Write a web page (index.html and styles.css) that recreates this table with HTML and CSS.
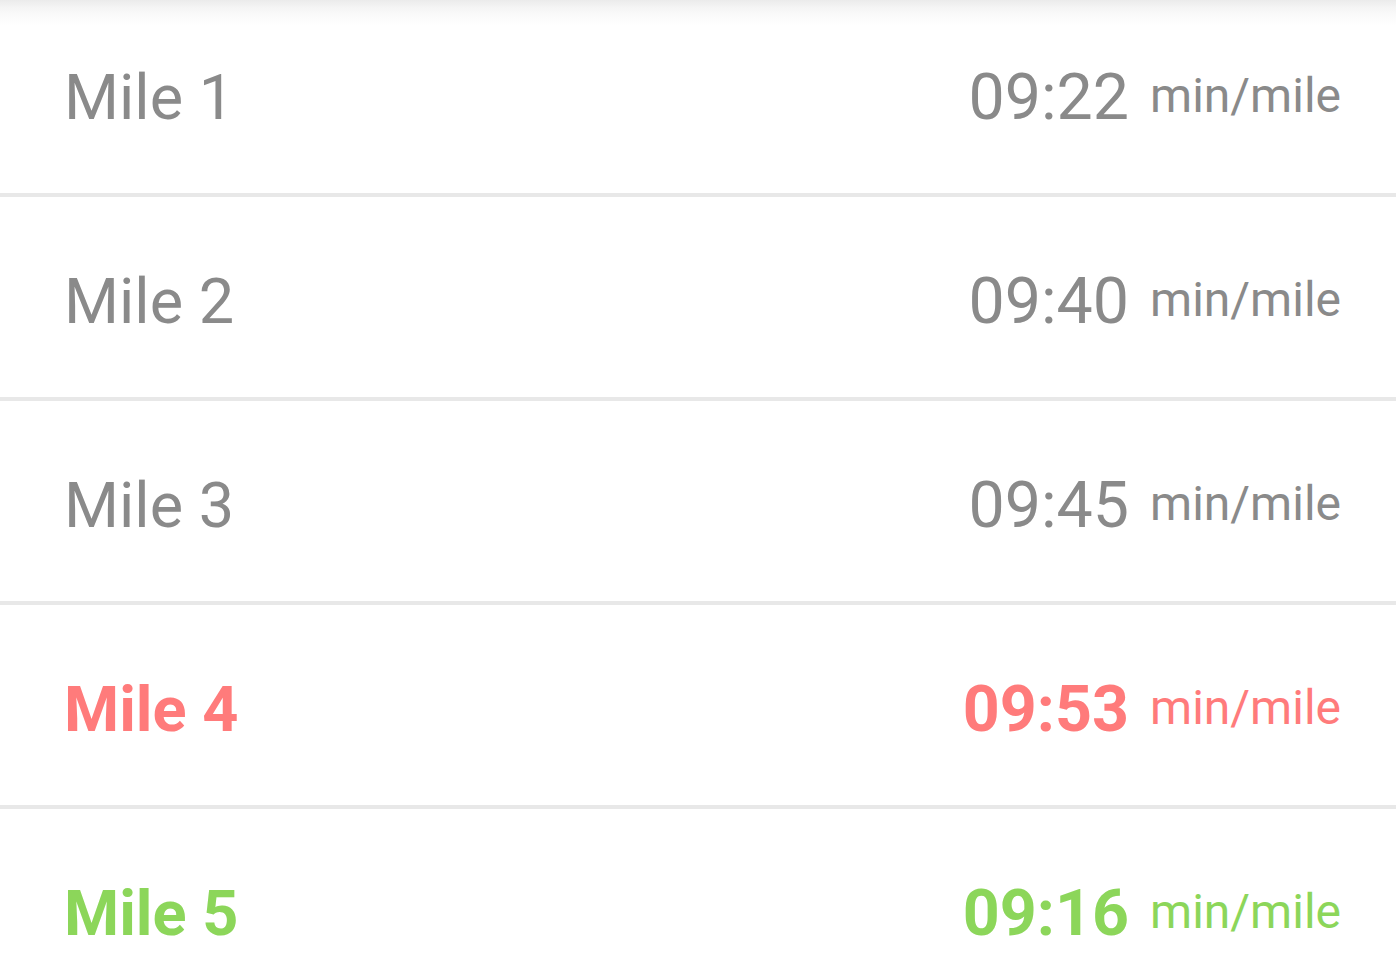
FILE: index.html
```html
<!DOCTYPE html>
<html>
<head>
<meta charset="utf-8">
<link rel="stylesheet" href="styles.css">
</head>
<body>
<div class="screen">
  <div class="shadow"></div>
  <ul class="splits">
    <li class="split"><span class="label">Mile 1</span><span class="pace"><span class="time">09:22</span><span class="unit">min/mile</span></span></li>
    <li class="split"><span class="label">Mile 2</span><span class="pace"><span class="time">09:40</span><span class="unit">min/mile</span></span></li>
    <li class="split"><span class="label">Mile 3</span><span class="pace"><span class="time">09:45</span><span class="unit">min/mile</span></span></li>
    <li class="split slow"><span class="label">Mile 4</span><span class="pace"><span class="time">09:53</span><span class="unit">min/mile</span></span></li>
    <li class="split fast"><span class="label">Mile 5</span><span class="pace"><span class="time">09:16</span><span class="unit">min/mile</span></span></li>
  </ul>
</div>
</body>
</html>
```
FILE: styles.css
```css
html, body {
  margin: 0;
  padding: 0;
  background: #ffffff;
}
body {
  font-family: Roboto, "Liberation Sans", sans-serif;
  overflow: hidden;
}
.screen {
  position: relative;
  width: 1396px;
  height: 961px;
  overflow: hidden;
}
.shadow {
  position: absolute;
  left: 0;
  top: 0;
  width: 100%;
  height: 26px;
  background: linear-gradient(to bottom, #ebebeb 0%, #f5f5f5 30%, #fbfbfb 65%, rgba(255,255,255,0) 100%);
  z-index: 2;
}
.splits {
  list-style: none;
  margin: -7px 0 0 0;
  padding: 0;
}
.split {
  display: flex;
  justify-content: space-between;
  align-items: baseline;
  height: 204px;
  box-sizing: border-box;
  padding: 70px 55px 0 64px;
  border-bottom: 4px solid #e8e8e8;
  color: #8a8a8a;
  line-height: 68px;
}
.label {
  font-size: 63px;
}
.pace {
  display: flex;
  align-items: baseline;
}
.time {
  font-size: 64.5px;
}
.unit {
  font-size: 48px;
  margin-left: 21px;
  position: relative;
  top: -7px;
}
.slow {
  color: #ff7b7b;
}
.fast {
  color: #8cd65a;
}
.slow .label, .slow .time,
.fast .label, .fast .time {
  font-weight: 700;
}
```
